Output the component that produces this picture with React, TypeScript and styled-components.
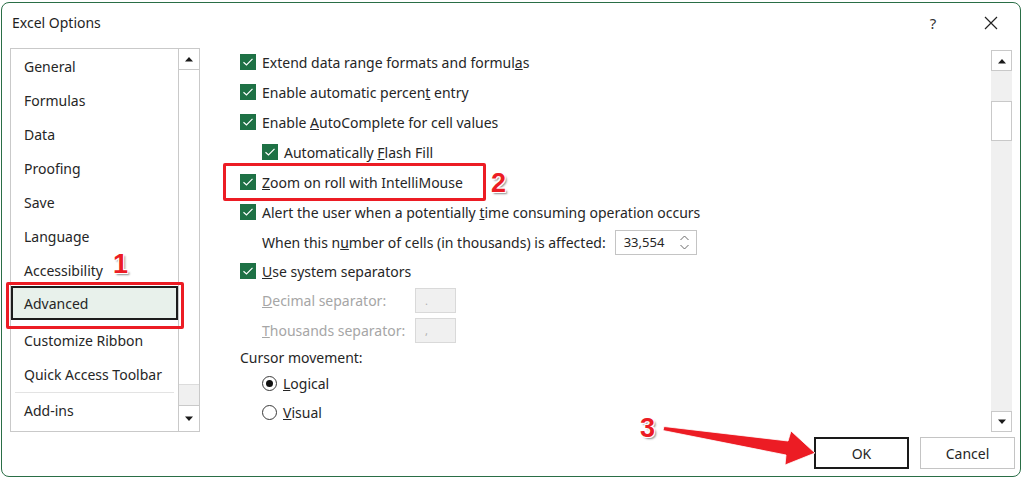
import React from "react";
import styled, { createGlobalStyle } from "styled-components";

const Global = createGlobalStyle`
  html, body { margin: 0; padding: 0; background: #ffffff; }
  body { font-family: "Noto Sans", "Open Sans", sans-serif; color: #262626; }
  * { box-sizing: border-box; }
`;

const Window = styled.div`
  position: relative;
  margin: 2px 0 0 1px;
  width: 1020px;
  height: 475px;
  border: 1px solid #2a6e46;
  border-radius: 8px;
  background: #ffffff;
  display: flex;
  flex-direction: column;
  overflow: hidden;
`;

const TitleBar = styled.div`
  height: 43px;
  display: flex;
  align-items: center;
  padding: 0 0 4px 10px;
  font-size: 14px;
  color: #1f1f1f;
`;

const Title = styled.div`
  flex: 1;
`;

const TitleButton = styled.div`
  width: 58px;
  height: 30px;
  display: flex;
  align-items: center;
  justify-content: center;
  font-size: 15px;
  color: #333;
`;

const Main = styled.div`
  flex: 1;
  display: flex;
  padding: 0 8px 0 8px;
  min-height: 0;
`;

const Sidebar = styled.div`
  margin-top: 2px;
  width: 190px;
  height: 384px;
  border: 1px solid #c9c9c9;
  display: flex;
`;

const NavList = styled.div`
  flex: 1;
  overflow: hidden;
  display: flex;
  flex-direction: column;
`;

const NavItem = styled.div<{ $selected?: boolean }>`
  flex: none;
  height: 34px;
  display: flex;
  align-items: center;
  padding-left: ${(p) => (p.$selected ? "11px" : "13px")};
  margin: ${(p) => (p.$selected ? "-1px 0 3px 0" : "0")};
  font-size: 14px;
  color: #262626;
  background: ${(p) => (p.$selected ? "#e8f1eb" : "transparent")};
  border: ${(p) => (p.$selected ? "2px solid #1c1c1c" : "none")};
`;

const NavDivider = styled.div`
  flex: none;
  height: 1px;
  margin: 1px 4px 0 4px;
  background: #e3e3e3;
`;

const ScrollBar = styled.div<{ $side?: boolean }>`
  width: 21px;
  display: flex;
  flex-direction: column;
  background: #f0f0f0;
  ${(p) =>
    p.$side
      ? "margin-top: 4px; height: 382px;"
      : "border-left: 1px solid #c9c9c9;"}
`;

const ScrollBtn = styled.div<{ $h: number; $border: "top" | "bottom" | "all" }>`
  flex: none;
  height: ${(p) => p.$h}px;
  background: #ffffff;
  display: flex;
  align-items: center;
  justify-content: center;
  ${(p) =>
    p.$border === "top"
      ? "border-top: 1px solid #c9c9c9;"
      : p.$border === "bottom"
      ? "border-bottom: 1px solid #c9c9c9;"
      : "border: 1px solid #c9c9c9;"}
`;

const ScrollThumb = styled.div`
  flex: 1;
  background: #ffffff;
  border-bottom: 1px solid #dcdcdc;
`;

const ScrollTrack = styled.div<{ $h?: number }>`
  ${(p) => (p.$h ? `height: ${p.$h}px; flex: none;` : "flex: 1;")}
  background: #f0f0f0;
`;

const Content = styled.div`
  flex: 1;
  display: flex;
  min-width: 0;
`;

const Options = styled.div`
  flex: 1;
  padding: 1px 0 0 40px;
  display: flex;
  flex-direction: column;
`;

const Row = styled.div<{ $h: number; $indent?: number }>`
  height: ${(p) => p.$h}px;
  display: flex;
  align-items: center;
  padding-left: ${(p) => p.$indent || 0}px;
  font-size: 14px;
  color: #262626;
  white-space: nowrap;
`;

const Label = styled.span<{ $disabled?: boolean; $w?: number; $plain?: boolean }>`
  margin-left: ${(p) => (p.$plain || p.$w ? 0 : 6)}px;
  color: ${(p) => (p.$disabled ? "#a6a6a6" : "#262626")};
  ${(p) => (p.$w ? `width: ${p.$w}px;` : "")}
`;

const Box = styled.span`
  width: 16px;
  height: 16px;
  flex: none;
  background: #1e7145;
  display: inline-flex;
  align-items: center;
  justify-content: center;
`;

const Radio = styled.span<{ $on?: boolean }>`
  width: 15px;
  height: 15px;
  flex: none;
  border-radius: 50%;
  border: 1px solid #3a3a3a;
  display: inline-flex;
  align-items: center;
  justify-content: center;
  &::after {
    content: "";
    width: 7px;
    height: 7px;
    border-radius: 50%;
    background: ${(p) => (p.$on ? "#111" : "transparent")};
  }
`;

const SpinBox = styled.div`
  margin-left: 9px;
  width: 82px;
  height: 25px;
  border: 1px solid #c4c4c4;
  display: flex;
  align-items: center;
  padding-left: 8px;
  font-size: 13px;
  color: #262626;
`;

const SpinValue = styled.span`
  flex: 1;
`;

const SpinArrows = styled.div`
  width: 16px;
  display: flex;
  flex-direction: column;
  align-items: center;
  gap: 3px;
  margin-right: 3px;
`;

const SepBox = styled.div`
  width: 41px;
  height: 25px;
  background: #f0f0f0;
  border: 1px solid #d9d9d9;
  font-size: 11px;
  color: #b0b0b0;
  padding-left: 9px;
  display: flex;
  align-items: center;
`;

const Footer = styled.div`
  height: 43px;
  display: flex;
  justify-content: flex-end;
  align-items: flex-start;
  padding: 4px 5px 0 0;
  gap: 11px;
`;

const Button = styled.div<{ $primary?: boolean }>`
  width: 95px;
  height: 32px;
  display: flex;
  align-items: center;
  justify-content: center;
  font-size: 14px;
  color: #262626;
  background: #ffffff;
  border: ${(p) => (p.$primary ? "2px solid #1a1a1a" : "1px solid #c4c4c4")};
`;

const Highlight = styled.div<{ $x: number; $y: number; $w: number; $h: number }>`
  position: absolute;
  left: ${(p) => p.$x}px;
  top: ${(p) => p.$y}px;
  width: ${(p) => p.$w}px;
  height: ${(p) => p.$h}px;
  border: 3px solid #ec1c24;
  border-radius: 2px;
  pointer-events: none;
`;

const Badge = styled.div<{ $x: number; $y: number }>`
  position: absolute;
  left: ${(p) => p.$x}px;
  top: ${(p) => p.$y}px;
  font-family: "Liberation Sans", Arial, sans-serif;
  font-weight: bold;
  font-size: 27px;
  line-height: 1;
  color: #ec1c24;
  text-shadow: -1px -1px 0 #fff, 1px -1px 0 #fff, -1px 1px 0 #fff, 1px 1px 0 #fff,
    2px 2px 2px rgba(0, 0, 0, 0.45);
`;

const ArrowSvg = styled.svg`
  position: absolute;
  left: 0;
  top: 0;
  pointer-events: none;
`;

const Check = () => (
  <svg width="12" height="10" viewBox="0 0 12 10">
    <path d="M1.5 5.2 L4.5 8 L10.5 1.8" fill="none" stroke="#ffffff" strokeWidth="1.2" />
  </svg>
);

const CheckBox = () => (
  <Box>
    <Check />
  </Box>
);

const Up = () => (
  <svg width="10" height="6" viewBox="0 0 10 6">
    <path d="M1 5.5 L5 1 L9 5.5 Z" fill="#1a1a1a" />
  </svg>
);
const Down = () => (
  <svg width="10" height="6" viewBox="0 0 10 6">
    <path d="M1 0.5 L5 5 L9 0.5 Z" fill="#1a1a1a" />
  </svg>
);

const Chevron = ({ up }: { up?: boolean }) => (
  <svg width="9" height="6" viewBox="0 0 9 6">
    <path
      d={up ? "M0.5 5 L4.5 1 L8.5 5" : "M0.5 1 L4.5 5 L8.5 1"}
      fill="none"
      stroke="#6a6a6a"
      strokeWidth="1"
    />
  </svg>
);

const navItems = [
  "General",
  "Formulas",
  "Data",
  "Proofing",
  "Save",
  "Language",
  "Accessibility",
];

export default function App() {
  return (
    <>
      <Global />
      <Window>
        <TitleBar>
          <Title>Excel Options</Title>
          <TitleButton>?</TitleButton>
          <TitleButton>
            <svg width="14" height="14" viewBox="0 0 14 14">
              <path d="M1 1 L13 13 M13 1 L1 13" stroke="#222" strokeWidth="1.2" />
            </svg>
          </TitleButton>
        </TitleBar>
        <Main>
          <Sidebar>
            <NavList>
              {navItems.map((n) => (
                <NavItem key={n}>{n}</NavItem>
              ))}
              <NavItem $selected>Advanced</NavItem>
              <NavItem>Customize Ribbon</NavItem>
              <NavItem>Quick Access Toolbar</NavItem>
              <NavDivider />
              <NavItem>Add-ins</NavItem>
            </NavList>
            <ScrollBar>
              <ScrollBtn $h={21} $border="bottom">
                <Up />
              </ScrollBtn>
              <ScrollThumb />
              <ScrollTrack $h={20} />
              <ScrollBtn $h={26} $border="top">
                <Down />
              </ScrollBtn>
            </ScrollBar>
          </Sidebar>
          <Content>
            <Options>
              <Row $h={30}>
                <CheckBox />
                <Label>
                  Extend data range formats and formul<u>a</u>s
                </Label>
              </Row>
              <Row $h={30}>
                <CheckBox />
                <Label>
                  Enable automatic percen<u>t</u> entry
                </Label>
              </Row>
              <Row $h={30}>
                <CheckBox />
                <Label>
                  Enable <u>A</u>utoComplete for cell values
                </Label>
              </Row>
              <Row $h={30} $indent={22}>
                <CheckBox />
                <Label>
                  Automatically <u>F</u>lash Fill
                </Label>
              </Row>
              <Row $h={30}>
                <CheckBox />
                <Label>
                  <u>Z</u>oom on roll with IntelliMouse
                </Label>
              </Row>
              <Row $h={30}>
                <CheckBox />
                <Label>
                  Alert the user when a potentially <u>t</u>ime consuming operation occurs
                </Label>
              </Row>
              <Row $h={30} $indent={22}>
                <Label $plain>
                  When this n<u>u</u>mber of cells (in thousands) is affected:
                </Label>
                <SpinBox>
                  <SpinValue>33,554</SpinValue>
                  <SpinArrows>
                    <Chevron up />
                    <Chevron />
                  </SpinArrows>
                </SpinBox>
              </Row>
              <Row $h={28}>
                <CheckBox />
                <Label>
                  <u>U</u>se system separators
                </Label>
              </Row>
              <Row $h={31} $indent={22}>
                <Label $disabled $w={153}>
                  <u>D</u>ecimal separator:
                </Label>
                <SepBox>.</SepBox>
              </Row>
              <Row $h={29} $indent={22}>
                <Label $disabled $w={153}>
                  <u>T</u>housands separator:
                </Label>
                <SepBox>,</SepBox>
              </Row>
              <Row $h={25}>
                <Label $plain>Cursor movement:</Label>
              </Row>
              <Row $h={26} $indent={22}>
                <Radio $on />
                <Label>
                  <u>L</u>ogical
                </Label>
              </Row>
              <Row $h={32} $indent={22}>
                <Radio />
                <Label>
                  <u>V</u>isual
                </Label>
              </Row>
            </Options>
            <ScrollBar $side>
              <ScrollBtn $h={21} $border="all">
                <Up />
              </ScrollBtn>
              <ScrollTrack $h={30} />
              <ScrollBtn $h={40} $border="all" />
              <ScrollTrack />
              <ScrollBtn $h={21} $border="all">
                <Down />
              </ScrollBtn>
            </ScrollBar>
          </Content>
        </Main>
        <Footer>
          <Button $primary>OK</Button>
          <Button>Cancel</Button>
        </Footer>
        <Highlight $x={4} $y={279} $w={178} $h={47} />
        <Highlight $x={221} $y={160} $w={263} $h={38} />
        <Badge $x={111} $y={248}>1</Badge>
        <Badge $x={489} $y={167}>2</Badge>
        <Badge $x={638} $y={412}>3</Badge>
        <ArrowSvg width="1020" height="475" viewBox="0 0 1020 475">
          <path
            d="M662 423.5 L786 438 L789 428 L813 450 L783 462 L784 452 L661 427.5 Z"
            fill="#ec1c24"
            stroke="#ffffff"
            strokeWidth="0.8"
          />
        </ArrowSvg>
      </Window>
    </>
  );
}
